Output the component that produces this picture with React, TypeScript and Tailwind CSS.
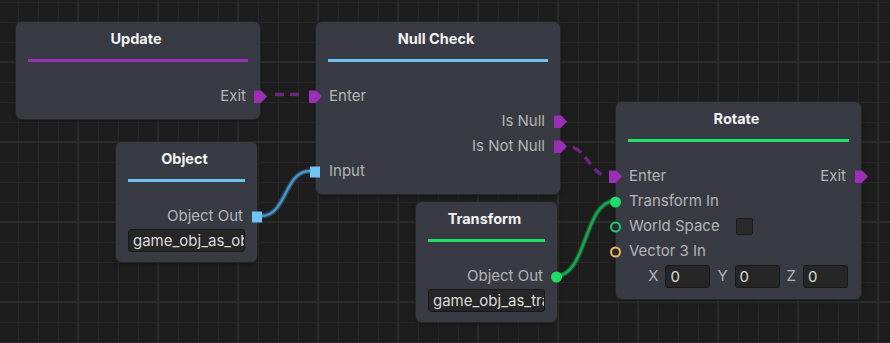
import { ReactNode } from 'react'
import clsx from 'clsx'

type PortKind = 'exec' | 'square' | 'dot' | 'ring'

function Port({ kind, side, color }: { kind: PortKind, side: 'left' | 'right', color: string }) {
  const pos = side === 'left' ? 'left-[-6px]' : 'right-[-5px]'
  if (kind === 'exec') {
    return (
      <div
        className={clsx(
          'absolute top-1/2 -translate-y-1/2 w-[13px] h-[13px] [clip-path:polygon(0_0,52%_0,100%_50%,52%_100%,0_100%)]',
          side === 'left' ? 'left-[-7px]' : 'right-[-7px]',
          color,
        )}
      />
    )
  }
  if (kind === 'square') {
    return <div className={clsx('absolute top-1/2 -translate-y-1/2 w-[10px] h-[11px]', pos, color)}/>
  }
  if (kind === 'dot') {
    return <div className={clsx('absolute top-1/2 -translate-y-1/2 w-[11px] h-[11px] rounded-full', pos, color)}/>
  }
  return <div className={clsx('absolute top-1/2 -translate-y-1/2 w-[11px] h-[11px] rounded-full border-[2.5px] bg-[#2a2c31]', pos, color)}/>
}

function Row({ children, className }: { children: ReactNode, className?: string }) {
  return (
    <div className={clsx('relative h-[25px] flex items-center text-[15px] text-[#b5b5b5]', className)}>
      {children}
    </div>
  )
}

function Node(
  { title, bar, className, children }:
  { title: string, bar: string, className: string, children: ReactNode }
) {
  return (
    <div className={clsx('absolute bg-[#383b44] rounded-[6px] shadow-[0_0_0_1px_#262626,0_2px_4px_rgba(0,0,0,0.35)] pb-[10px]', className)}>
      <div className="mt-[7px] h-[20px] leading-[20px] text-center pr-[4px] text-[14.5px] font-bold text-[#f2f2f2]">
        {title}
      </div>
      <div className={clsx('mx-[12px] mt-[10px] h-[3px]', bar)}/>
      <div className="mt-[22px] flex flex-col">
        {children}
      </div>
    </div>
  )
}

function Field({ value, className }: { value: string, className?: string }) {
  return (
    <div className={clsx('h-[23px] bg-[#262626] border border-[#181818] rounded-[3px] text-[15px] leading-[21px] text-[#dcdcdc] px-[4px] overflow-hidden whitespace-nowrap', className)}>
      {value}
    </div>
  )
}

const purple = 'bg-[#9b2fb6]'

export default function App() {
  return (
    <div
      className="relative w-[890px] h-[343px] overflow-hidden bg-[#1d1d1d] font-['Inter','Noto_Sans',sans-serif] [background-image:linear-gradient(to_right,#2c2c2c_2px,transparent_2px),linear-gradient(to_bottom,#2c2c2c_2px,transparent_2px),linear-gradient(to_right,#272727_1px,transparent_1px),linear-gradient(to_bottom,#272727_1px,transparent_1px)] [background-size:80px_80px,80px_80px,20px_20px,20px_20px] [background-position:77px_0,0_61px,18px_0,0_2px]"
    >
      <svg className="absolute inset-0" width="890" height="343" viewBox="0 0 890 343" fill="none">
        <path d="M275 94.5 L300 94.5" stroke="#6d2682" strokeWidth="3.5" strokeDasharray="9 6"/>
        <path d="M567 146 C 586 146, 590 176, 609 176" stroke="#6d2682" strokeWidth="3.5" strokeDasharray="0 6 10 6 9 6 9 30"/>
        <path d="M261 216 C 287 216, 284 171, 310 171" stroke="#274a63" strokeWidth="5"/>
        <path d="M261 216 C 287 216, 284 171, 310 171" stroke="#4d93c4" strokeWidth="2.5"/>
        <path d="M556 276 C 587 276, 584 201, 615 201" stroke="#145c2e" strokeWidth="5"/>
        <path d="M556 276 C 587 276, 584 201, 615 201" stroke="#20a351" strokeWidth="2.5"/>
      </svg>

      <Node title="Update" bar="bg-[#9b2fb6]" className="left-[16px] top-[22px] w-[244px]">
        <Row className="justify-end pr-[14px]">
          Exit
          <Port kind="exec" side="right" color={purple}/>
        </Row>
      </Node>

      <Node title="Null Check" bar="bg-[#6ec2f2]" className="left-[316px] top-[22px] w-[244px]">
        <Row className="pl-[13px]">
          <Port kind="exec" side="left" color={purple}/>
          Enter
        </Row>
        <Row className="justify-end pr-[15px]">
          Is Null
          <Port kind="exec" side="right" color={purple}/>
        </Row>
        <Row className="justify-end pr-[15px]">
          Is Not Null
          <Port kind="exec" side="right" color={purple}/>
        </Row>
        <Row className="pl-[13px]">
          <Port kind="square" side="left" color="bg-[#6ec4f7]"/>
          Input
        </Row>
      </Node>

      <Node title="Object" bar="bg-[#6ec2f2]" className="left-[116px] top-[142px] w-[141px]">
        <Row className="justify-end pr-[14px]">
          Object Out
          <Port kind="square" side="right" color="bg-[#6ec4f7]"/>
        </Row>
        <Field value="game_obj_as_object" className="mx-[12px]"/>
      </Node>

      <Node title="Transform" bar="bg-[#1fe06b]" className="left-[416px] top-[202px] w-[141px]">
        <Row className="justify-end pr-[14px]">
          Object Out
          <Port kind="dot" side="right" color="bg-[#1fdc68]"/>
        </Row>
        <Field value="game_obj_as_transform" className="mx-[12px]"/>
      </Node>

      <Node title="Rotate" bar="bg-[#1fe06b]" className="left-[616px] top-[102px] w-[245px]">
        <Row className="justify-between pl-[13px] pr-[15px]">
          <Port kind="exec" side="left" color={purple}/>
          <span>Enter</span>
          <span>Exit</span>
          <Port kind="exec" side="right" color={purple}/>
        </Row>
        <Row className="pl-[13px]">
          <Port kind="dot" side="left" color="bg-[#1fdc68]"/>
          Transform In
        </Row>
        <Row className="pl-[13px]">
          <Port kind="ring" side="left" color="border-[#25c472]"/>
          World Space
          <div className="ml-[16px] w-[17px] h-[17px] bg-[#2a2a2a] border border-[#1a1a1a] rounded-[2px]"/>
        </Row>
        <Row className="pl-[13px]">
          <Port kind="ring" side="left" color="border-[#eab85e]"/>
          Vector 3 In
        </Row>
        <div className="h-[25px] flex items-center justify-end gap-[7px] pr-[13px] text-[15px] text-[#b5b5b5]">
          <span>X</span>
          <Field value="0" className="w-[45px]"/>
          <span>Y</span>
          <Field value="0" className="w-[45px]"/>
          <span>Z</span>
          <Field value="0" className="w-[45px]"/>
        </div>
      </Node>
    </div>
  )
}
